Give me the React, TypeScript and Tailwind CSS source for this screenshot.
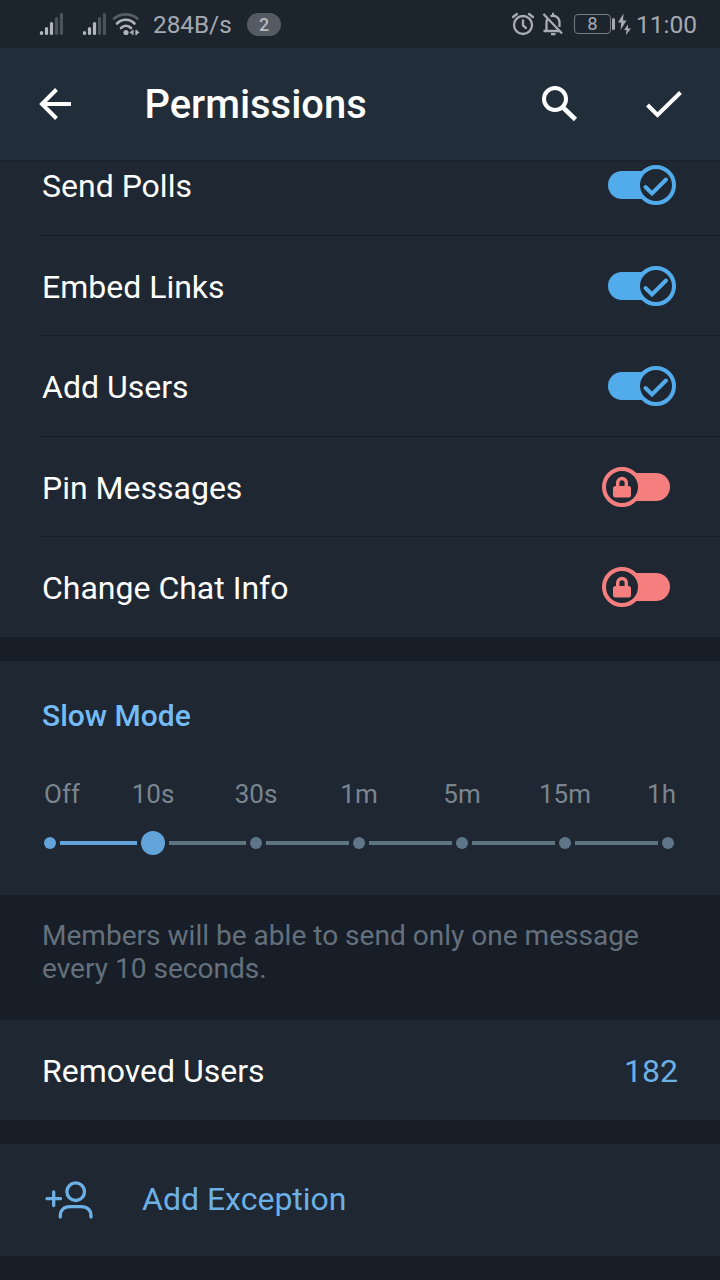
import React from "react";

function Signal() {
  return (
    <svg width="24" height="24" viewBox="0 0 24 24" strokeWidth="3.200" strokeLinecap="round">
      <g stroke="#b3b7bd">
        <path d="M2.500 21.500v-1" />
        <path d="M7.500 21.500v-5" />
        <path d="M12.500 21.500v-10" />
      </g>
      <g stroke="#4a525b">
        <path d="M17.500 21.500V6.500" />
        <path d="M22.400 21.500V2.500" />
      </g>
    </svg>
  );
}

function Wifi() {
  return (
    <svg width="28" height="24" viewBox="0 0 28 24" fill="none" strokeLinecap="round" strokeWidth="2.6">
      <path d="M2 6.500C9 1 18.500 1 25.500 6.500" stroke="#565d66" />
      <path d="M5 11.500C10 6.500 17.500 6.500 22.500 11.500" stroke="#b0b4ba" />
      <path d="M9 16C12 13 16 13 19 16" stroke="#b0b4ba" />
      <circle cx="14" cy="20.500" r="2.600" fill="#b0b4ba" />
      <path d="M17.500 20.500 20.500 18V22.500M24 23V17.500L27.500 20.500Z" fill="#b0b4ba" />
      <path d="M21 18.500V22.500M24 18.500V22.500" stroke="#b0b4ba" strokeWidth="1.300" />
    </svg>
  );
}

function StatusBar() {
  return (
    <div className="flex h-12 shrink-0 items-center bg-[#1c242e] pl-[39px] pr-6 text-[#a5a9b0]">
      <Signal />
      <div className="w-[19px]" />
      <Signal />
      <div className="w-[6px]" />
      <Wifi />
      <span className="ml-[13px] w-[80px] whitespace-nowrap pt-[2px] text-[24.3px] leading-none">284B/s</span>
      <span className="ml-[14px] flex h-[23px] w-[34px] items-center justify-center rounded-full bg-[#555b64] text-[18px] font-medium text-[#b7bbc1]">2</span>
      <div className="flex-1" />
      <svg width="24" height="24" viewBox="0 0 24 24" fill="none" stroke="#a9adb3" strokeWidth="2.300" strokeLinecap="round">
        <circle cx="12" cy="13" r="9" />
        <path d="M12 8.500v5l3 2.500M2 5 6 2M18 2l4 3" />
      </svg>
      <svg className="ml-[7px]" width="22" height="24" viewBox="0 0 22 24" fill="none" stroke="#a9adb3" strokeWidth="2.300">
        <path d="M1.500 2 20 21.500M1.500 19h15.500M4.500 18.500V10.500C4.500 9 5 7.500 5.800 6.500M8.500 4.300C13 2.500 17.500 5.500 17.500 10.500V15M10 1.800h2M9 22.200h4.500" />
      </svg>
      <div className="ml-[10px] flex h-[20px] w-[37px] items-center justify-center rounded-[4px] border-[1.500px] border-[#747b83] pt-px text-[18.5px] leading-none">8</div>
      <div className="ml-px h-3 w-[3px] rounded-sm bg-[#a5a9b0]" />
      <svg className="ml-[3px]" width="13" height="22" viewBox="0 0 13 22" fill="#a9adb3">
        <path d="M5.500 0.500 0 9.500h3.300L2.500 17 8.500 7.500H5ZM10 11.500 6 17h2.600L8 22 13 15.500H10Z" />
      </svg>
      <span className="ml-[5px] w-[60px] whitespace-nowrap pt-[2px] text-right text-[24.500px] leading-none">11:00</span>
    </div>
  );
}

function Header() {
  return (
    <header className="flex h-28 shrink-0 items-center bg-[#222d3a] pl-[38px] pr-[37px] text-white">
      <svg width="34" height="34" viewBox="0 0 34 34" fill="none" stroke="currentColor" strokeWidth="4">
        <path d="M33 17H4M18.500 2.500 4 17 18.500 31.500" />
      </svg>
      <h1 className="ml-[72.5px] flex-1 pt-px text-[39.9px] font-medium leading-none">Permissions</h1>
      <svg width="38" height="38" viewBox="0 0 38 38" fill="none" stroke="currentColor" strokeWidth="4">
        <circle cx="14" cy="14" r="11" />
        <path d="M22 22.500 34.500 34.500" strokeWidth="4.600" />
      </svg>
      <svg className="ml-[66px]" width="38" height="30" viewBox="0 0 38 30" fill="none" stroke="currentColor" strokeWidth="4">
        <path d="M2.500 16 12.500 26 35.500 3.500" />
      </svg>
    </header>
  );
}

function Toggle({ on }: { on: boolean }) {
  return on ? (
    <svg width="68" height="40" viewBox="0 0 68 40" fill="none">
      <rect y="6" width="60" height="28" rx="14" fill="#52abea" />
      <circle cx="48" cy="20" r="18" fill="#1e2732" stroke="#52abea" strokeWidth="4" />
      <path d="m37.500 22 6.500 6.500L58 14.500" stroke="#52abea" strokeWidth="4" strokeLinecap="round" />
    </svg>
  ) : (
    <svg className="mr-[6px]" width="68" height="40" viewBox="0 0 68 40" fill="none">
      <rect x="8" y="6" width="60" height="28" rx="14" fill="#f57f7f" />
      <circle cx="20" cy="20" r="18" fill="#1e2732" stroke="#f57f7f" strokeWidth="4" />
      <rect x="11" y="19" width="18" height="11.500" rx="2.500" fill="#f57f7f" />
      <path d="M15.700 20v-4.200a4.300 4.300 0 0 1 8.600 0V20" stroke="#f57f7f" strokeWidth="3.400" />
    </svg>
  );
}

const permissions = [
  { label: "Send Polls", on: true, size: "h-[76px] pt-[5px]" },
  { label: "Embed Links", on: true, size: "h-[100px] pt-[29.5px]" },
  { label: "Add Users", on: true, size: "h-[101px] pt-[30px]" },
  { label: "Pin Messages", on: false, size: "h-[100px] pt-[29.5px]" },
  { label: "Change Chat Info", on: false, size: "h-[100px] pt-[30px] border-b-0" },
];

const steps = ["10s", "30s", "1m", "5m", "15m"];

function SlowMode() {
  return (
    <section className="h-[234px] shrink-0 bg-[#1e2732] pt-[37px]">
      <h2 className="pl-[42px] text-[30px] font-medium leading-9 text-[#74bcf8]">Slow Mode</h2>
      <div className="mt-11 flex pl-11 pr-11 text-[26px] leading-8 text-[#7b858f]">
        <span className="w-[57.5px]">Off</span>
        {steps.map((s) => (
          <span key={s} className="w-[103px] text-center">{s}</span>
        ))}
        <span className="flex-1 text-right">1h</span>
      </div>
      <div className="mt-[21px] flex h-6 items-center gap-1 pl-11 pr-[46px]">
        <i className="size-3 rounded-full bg-[#62a3da]" />
        <i className="h-1 w-[77px] bg-[#62a3da]" />
        <i className="size-6 rounded-full bg-[#62a3da]" />
        <i className="h-1 w-[77px] bg-[#5d7481]" />
        <i className="size-3 rounded-full bg-[#5f7688]" />
        {[0, 1, 2, 3].map((n) => (
          <React.Fragment key={n}>
            <i className="h-1 w-[83px] bg-[#5d7481]" />
            <i className="size-3 rounded-full bg-[#5f7688]" />
          </React.Fragment>
        ))}
      </div>
    </section>
  );
}

export default function App() {
  return (
    <div className="flex h-[1280px] w-[720px] flex-col overflow-hidden bg-[#171e27] font-['Roboto',sans-serif]">
      <StatusBar />
      <Header />
      <section className="relative shrink-0 bg-[#1e2732] pl-10">
        <div className="absolute inset-x-0 top-0 h-[3px] bg-linear-to-b from-[#19212b] to-[#1e2732]" />
        {permissions.map((p) => (
          <div key={p.label} className={`flex items-start justify-between border-b border-[#171e28] pl-[2px] pr-11 ${p.size}`}>
            <span className="pt-[3.1px] text-[32px] leading-9 text-white">{p.label}</span>
            <Toggle on={p.on} />
          </div>
        ))}
      </section>
      <div className="h-6 shrink-0" />
      <SlowMode />
      <p className="h-[125px] shrink-0 pl-[42px] pt-6 text-[28.05px] leading-[33px] text-[#65707d]">
        Members will be able to send only one message
        <br />
        every 10 seconds.
      </p>
      <div className="flex h-[100px] shrink-0 items-center justify-between bg-[#1e2732] pl-[42px] pr-[42px] pt-px text-[32px]">
        <span className="text-white">Removed Users</span>
        <span className="text-[#6cb0e6]">182</span>
      </div>
      <div className="h-6 shrink-0" />
      <div className="flex h-28 shrink-0 items-center bg-[#1e2732] pl-11 text-[32px] text-[#6cb0e6]">
        <svg width="50" height="40" viewBox="0 0 50 40" fill="none" stroke="currentColor" strokeWidth="3.300" strokeLinecap="round">
          <circle cx="31.700" cy="11.700" r="8.800" />
          <path d="M16.300 37V36C16.300 30 20 26.700 26 26.700H37C43 26.700 47 30 47 36V37M3 18.700H16.500M9.700 12V25.500" />
        </svg>
        <span className="ml-12 pb-[2px]">Add Exception</span>
      </div>
    </div>
  );
}
